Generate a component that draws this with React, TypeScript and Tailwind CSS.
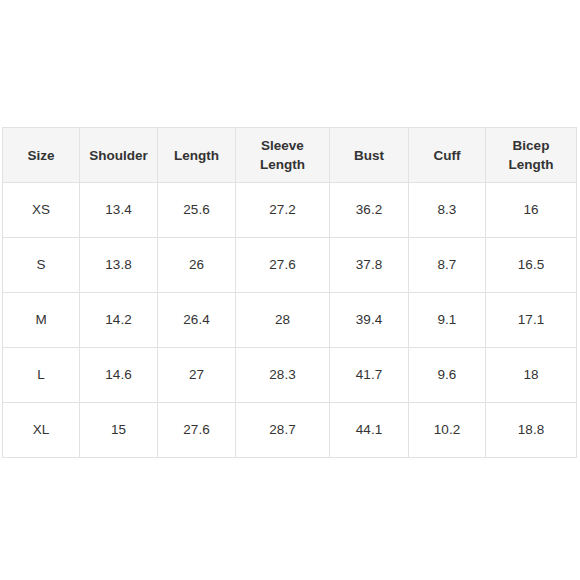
const headers = ["Size", "Shoulder", "Length", "Sleeve\nLength", "Bust", "Cuff", "Bicep\nLength"];
const widths = ["w-[77px]", "w-[78px]", "w-[78px]", "w-[94px]", "w-[79px]", "w-[77px]", "w-[91px]"];

const rows = [
  ["XS", "13.4", "25.6", "27.2", "36.2", "8.3", "16"],
  ["S", "13.8", "26", "27.6", "37.8", "8.7", "16.5"],
  ["M", "14.2", "26.4", "28", "39.4", "9.1", "17.1"],
  ["L", "14.6", "27", "28.3", "41.7", "9.6", "18"],
  ["XL", "15", "27.6", "28.7", "44.1", "10.2", "18.8"],
];

export default function App() {
  return (
    <div className="w-[580px] h-[580px] bg-white pt-[127px] pl-[2px] font-['Liberation_Sans',Arial,sans-serif] text-[#333] text-[13.5px]">
      <table className="border-collapse table-fixed w-[575px]">
        <thead>
          <tr className="h-[55px] bg-[#f5f5f5]">
            {headers.map((h, i) => (
              <th
                key={h}
                className={`${widths[i]} border border-[#e2e2e2] font-bold text-center leading-[19px] whitespace-pre-line`}
              >
                {h}
              </th>
            ))}
          </tr>
        </thead>
        <tbody>
          {rows.map((r) => (
            <tr key={r[0]} className="h-[55px]">
              {r.map((c, i) => (
                <td key={i} className="border border-[#e2e2e2] text-center">
                  {c}
                </td>
              ))}
            </tr>
          ))}
        </tbody>
      </table>
    </div>
  );
}
